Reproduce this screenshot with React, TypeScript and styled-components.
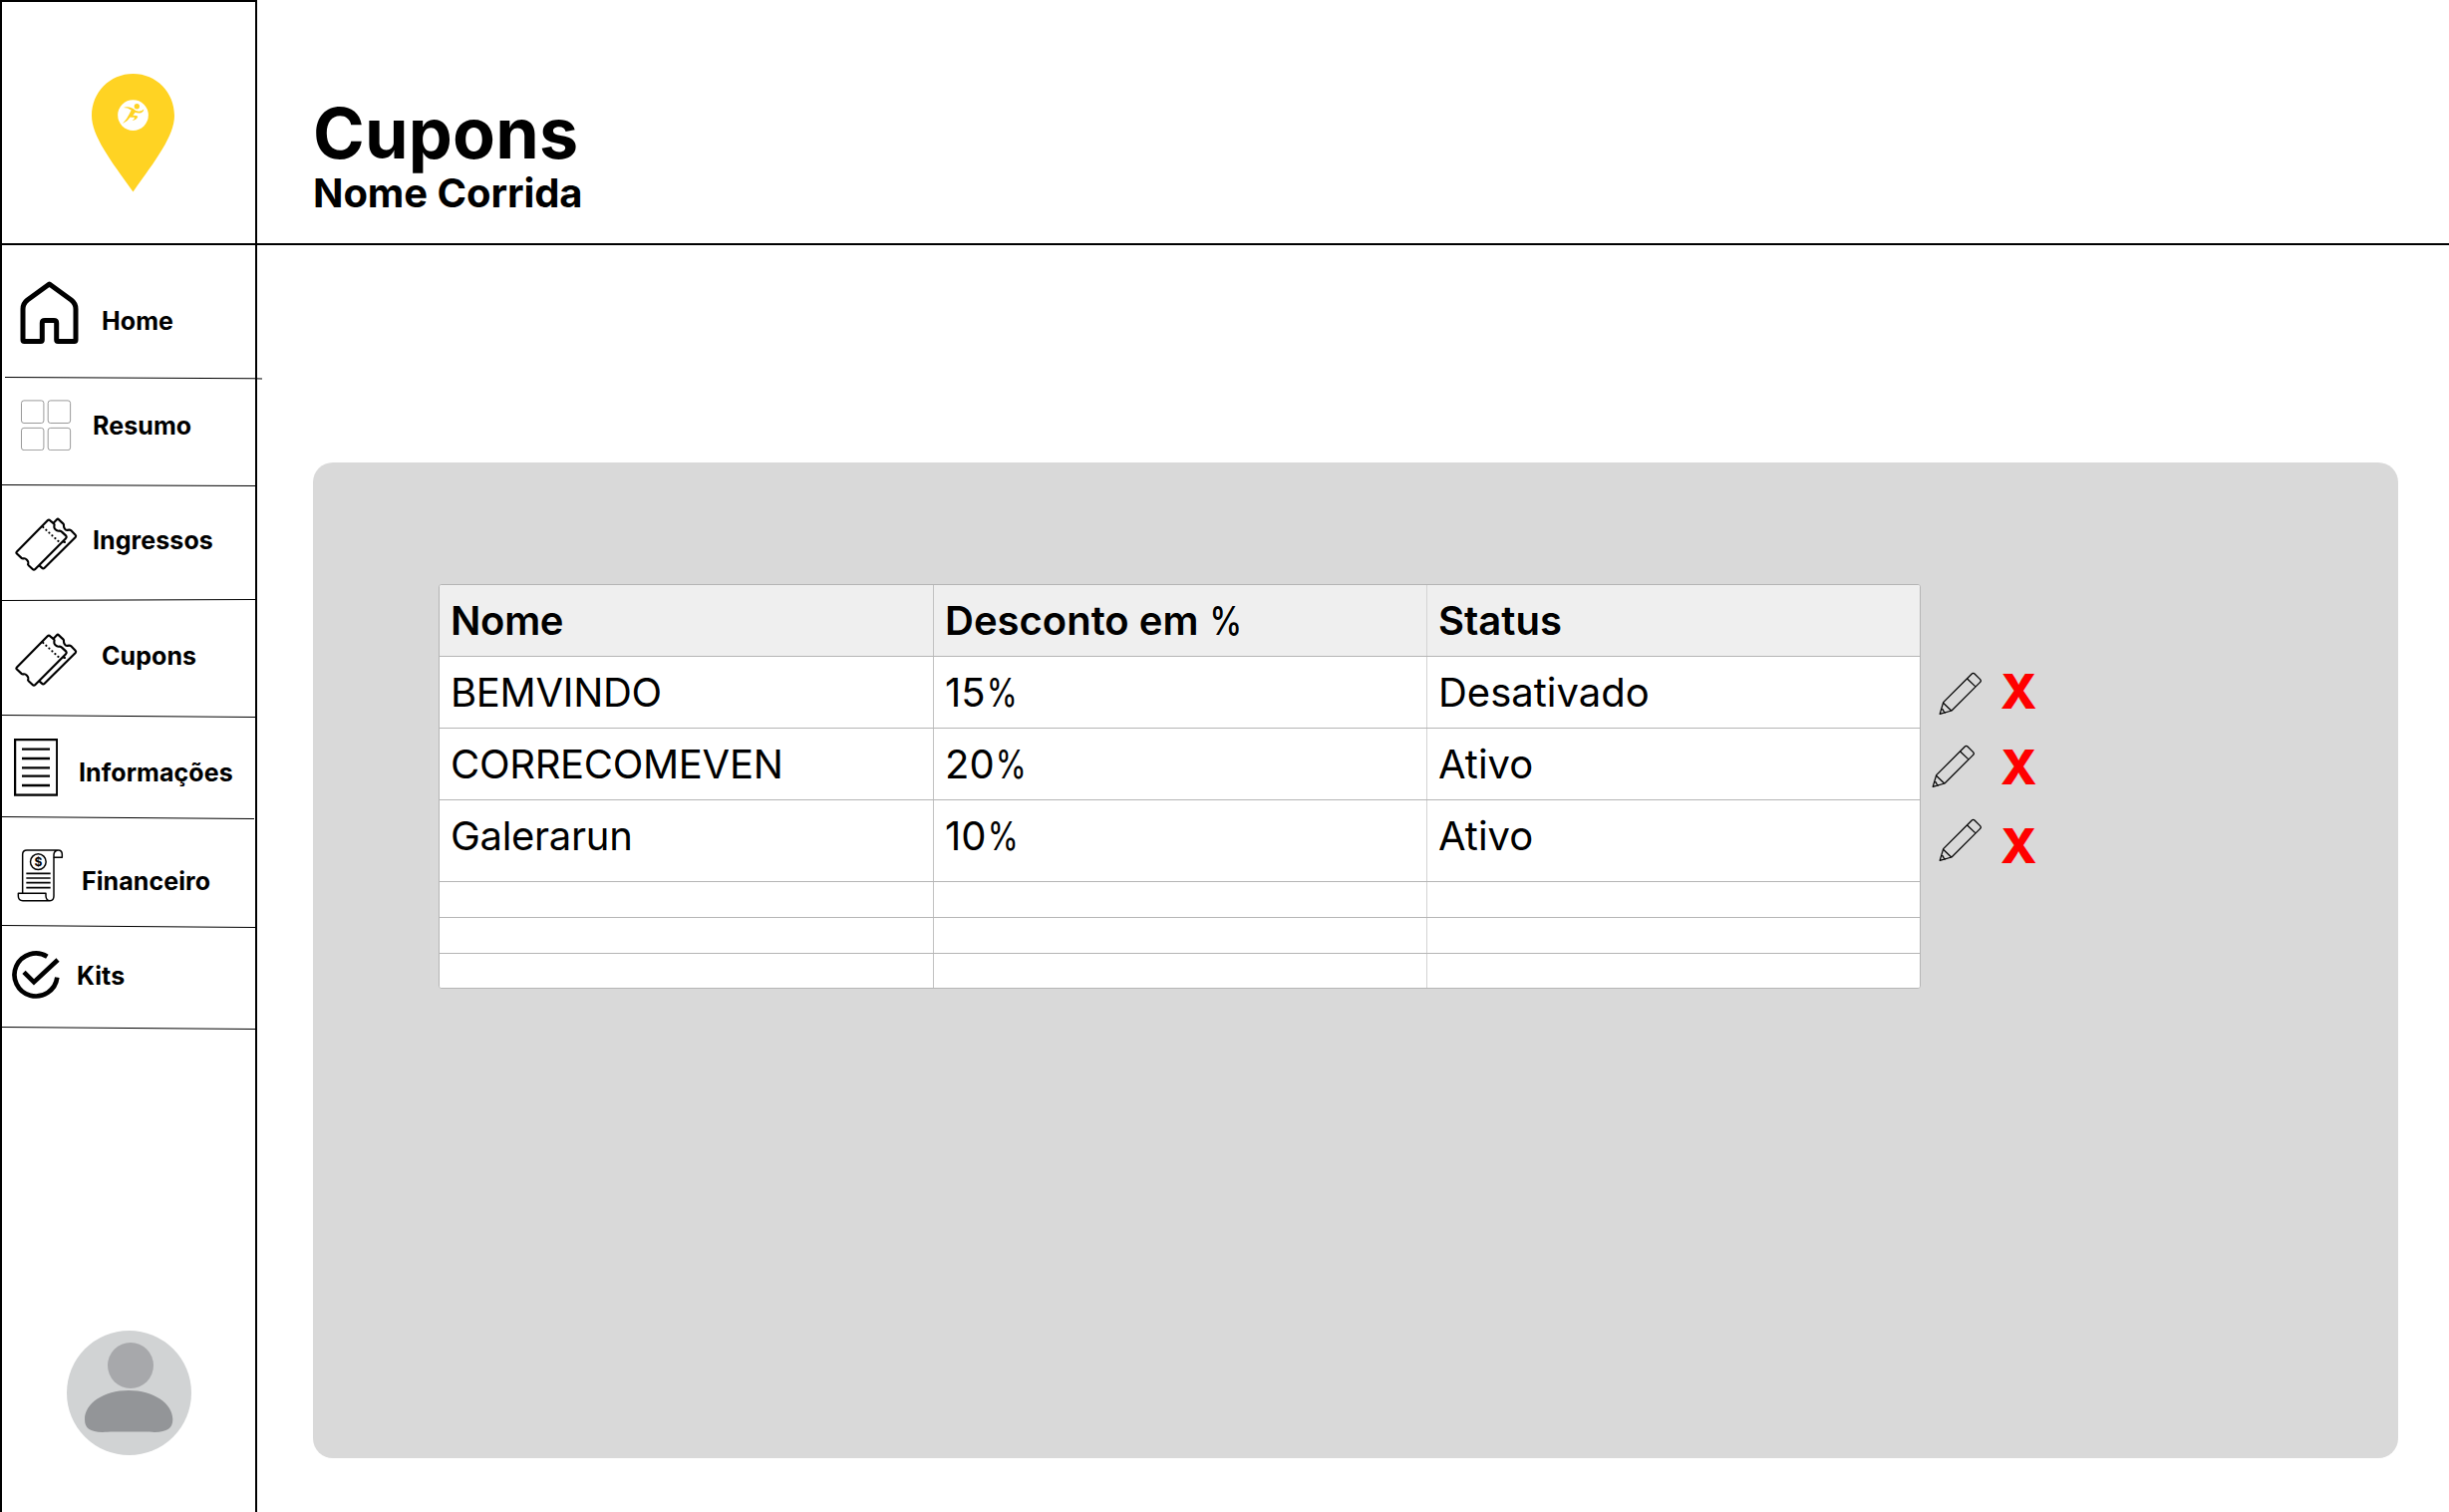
import React from "react";
import styled, { createGlobalStyle } from "styled-components";

const GlobalStyle = createGlobalStyle`
  *, *::before, *::after { box-sizing: border-box; }
  body { margin: 0; background: #fff; color: #000; font-family: Inter, "Liberation Sans", sans-serif; }
  svg { display: block; flex: none; }
`;

const Page = styled.div`
  display: grid;
  grid-template-columns: 258px 1fr;
  width: 2457px;
  height: 1517px;
  overflow: hidden;
  background: #fff;
`;

const Sidebar = styled.aside`
  display: flex;
  flex-direction: column;
  border: 2px solid #000;
  border-bottom: 0;
`;

const LogoBox = styled.div`
  flex: none;
  height: 244px;
  padding: 72px 0 0 90px;
  border-bottom: 2px solid #000;
`;

const Nav = styled.nav`
  display: flex;
  flex-direction: column;
`;

const NavItem = styled.a<{ $height: number }>`
  display: flex;
  align-items: flex-start;
  height: ${(p) => p.$height}px;
  color: #000;
  text-decoration: none;
`;

const IconSlot = styled.span<{ $left: number; $top: number; $width: number }>`
  flex: none;
  width: ${(p) => p.$left + p.$width}px;
  padding: ${(p) => p.$top}px 0 0 ${(p) => p.$left}px;
`;

const NavLabel = styled.span<{ $gap: number; $top: number }>`
  padding: ${(p) => p.$top}px 0 0 ${(p) => p.$gap}px;
  font-size: 25px;
  line-height: 30px;
  font-weight: 700;
  letter-spacing: 0.08px;
  white-space: nowrap;
`;

const Divider = styled.div<{ $drop: number; $start?: number; $length?: number }>`
  flex: none;
  height: 1px;
  width: ${(p) => p.$length ?? 254}px;
  margin-left: ${(p) => p.$start ?? 0}px;
  background: #000;
  transform: skewY(${(p) => Math.atan(p.$drop / (p.$length ?? 254))}rad);
  transform-origin: left center;
`;

const UserBox = styled.div`
  margin-top: auto;
  padding: 0 0 57px 65px;
`;

const Main = styled.main`
  display: flex;
  flex-direction: column;
  min-width: 0;
`;

const Header = styled.header`
  flex: none;
  height: 246px;
  padding: 95px 0 0 56px;
  border-bottom: 2px solid #000;
`;

const Title = styled.h1`
  margin: 0;
  font-size: 70px;
  line-height: 78px;
  font-weight: 700;
  letter-spacing: 0.2px;
`;

const Subtitle = styled.h2`
  margin: 0;
  font-size: 40px;
  line-height: 41px;
  font-weight: 700;
  letter-spacing: -0.08px;
`;

const Panel = styled.section`
  display: flex;
  align-items: flex-start;
  width: 2092px;
  height: 999px;
  margin: 218px 0 0 56px;
  padding: 122px 0 0 126px;
  border-radius: 20px;
  background: #d9d9d9;
`;

const Table = styled.div`
  width: 1487px;
  border: 1px solid #b5b5b5;
  border-radius: 3px;
  overflow: hidden;
  background: #fff;
`;

const Row = styled.div<{ $height: number; $head?: boolean }>`
  display: grid;
  grid-template-columns: 496px 495px 1fr;
  height: ${(p) => p.$height}px;
  background: ${(p) => (p.$head ? "#efefef" : "#fff")};
  font-weight: ${(p) => (p.$head ? 600 : 400)};
  border-bottom: 1px solid #b5b5b5;
  &:last-child { border-bottom: 0; }
`;

const Cell = styled.div`
  padding: 12px 0 0 11px;
  font-size: 40px;
  line-height: 48px;
  white-space: nowrap;
  border-right: 1px solid #d3d3d3;
  &:first-child { letter-spacing: -0.3px; border-right-color: #c2c2c2; }
  &:last-child { border-right: 0; }
`;

const PercentSign = styled.span<{ $strong?: boolean }>`
  display: inline-block;
  font-weight: ${(p) => (p.$strong ? 500 : 400)};
  transform: scaleX(${(p) => (p.$strong ? 0.82 : 0.79)});
  transform-origin: 3px 50%;
`;

const Actions = styled.div`
  display: flex;
  flex-direction: column;
`;

const ActionRow = styled.div<{ $height: number }>`
  display: flex;
  align-items: flex-start;
  height: ${(p) => p.$height}px;
`;

const IconButton = styled.button<{ $left: number; $top: number }>`
  flex: none;
  width: 68px;
  height: 60px;
  margin: 0;
  border: 0;
  background: none;
  padding: ${(p) => p.$top}px 0 0 ${(p) => p.$left}px;
`;

const DeleteButton = styled.button<{ $top: number }>`
  margin: ${(p) => p.$top}px 0 0;
  padding: 0 0 0 12px;
  border: 0;
  background: none;
  color: #ff0000;
  font: 800 48px/48px Inter, "Liberation Sans", sans-serif;
`;

const Logo = () => (
  <svg width="83" height="118.5" viewBox="36 42 249 355">
    <path
      fill="#ffd323"
      d="M160.500 42C231 42 285 98 285 168C285 228 229 302 160.500 397C92 302 36 228 36 168C36 98 90 42 160.500 42Z"
    />
    <circle cx="160.500" cy="166.500" r="46" fill="#fff" />
    <g fill="#ffd323">
      <circle cx="172" cy="140" r="8" />
      <path d="M132 144Q146 138 161 147Q168 155 178 155Q188 154 193 148Q192 159 179 160Q171 160 167 158L160 167Q173 167 175 171Q171 181 158 183Q166 177 165 173Q156 174 152 172Q145 184 129 192Q142 178 149 163L155 151Q145 144 132 144Z" />
    </g>
  </svg>
);

const HomeIcon = () => (
  <svg width="64" height="68" viewBox="0 0 64 68" fill="none" stroke="#000" strokeWidth="5" strokeLinejoin="round">
    <path d="M31.500 5L53.500 21Q58 24.500 58 30V61Q58 62.500 56.500 62.500H40.200Q38.700 62.500 38.700 61V44Q38.700 41.500 36 41.500H27Q24.300 41.500 24.300 44V61Q24.300 62.500 22.800 62.500H6.500Q5 62.500 5 61V30Q5 24.500 9.500 21Z" />
  </svg>
);

const GridIcon = () => (
  <svg width="52" height="52" viewBox="0 0 52 52" fill="none" stroke="#808080" strokeWidth="0.8">
    <rect x="1.500" y="1.900" width="22.400" height="22.600" rx="2.500" />
    <rect x="28.200" y="1.900" width="22.400" height="22.600" rx="2.500" />
    <rect x="1.500" y="29.400" width="22.400" height="22.200" rx="2.500" />
    <rect x="28.200" y="29.400" width="22.400" height="22.200" rx="2.500" />
  </svg>
);

const TicketIcon = () => (
  <svg width="65" height="56.667" viewBox="42 145 195 170" fill="none" stroke="#000" strokeWidth="6.5" strokeLinejoin="round" strokeLinecap="round">
    <path d="M50 252L143 158Q147 154 151 158L162 167Q165 170 163 175Q162 181 167 185Q172 190 178 189Q183 188 186 192L199 204Q202 208 198 212L106 304Q102 308 98 304L86 293Q83 290 85 286Q86 281 81 276Q76 271 71 272Q67 273 64 270L50 257Q48 254 50 252Z" />
    <path d="M161 165L171 155Q174 151 177 155L190 167Q193 170 192 175Q192 181 197 185Q201 188 206 186Q211 185 214 188L227 201Q230 204 227 208L134 300Q130 304 126 300L119 294" />
    <path d="M130 178L178 222" strokeWidth="6.500" strokeDasharray="0.100 12.200" />
    <path d="M192 222L195 223" />
  </svg>
);

const DocumentIcon = () => (
  <svg width="44.333" height="57.667" viewBox="42 94 133 173" fill="none" stroke="#000" strokeWidth="7">
    <rect x="45.200" y="97.200" width="126.600" height="166.600" />
    <path d="M66 126H150M66 154H150M66 182H150M66 207H150M66 235H150" />
  </svg>
);

const BillIcon = () => (
  <svg width="47.333" height="54.667" viewBox="50 422 142 164" fill="none" stroke="#000" strokeWidth="4.400" strokeLinejoin="round">
    <path d="M67 557V441Q67 428 80 428H174Q186 428 186 441V450H161V441Q162 430 173 428" />
    <path d="M161 450V566Q161 580 149 580H68Q54 580 54 566V558H137V566Q138 580 149 580" />
    <circle cx="114" cy="463" r="23.500" />
    <path d="M78 498H151M78 512H151M78 526H151M78 541H151" strokeWidth="5" />
    <text x="114" y="476" textAnchor="middle" fontFamily="Inter, sans-serif" fontSize="36" fontWeight="700" fill="#000" stroke="none">
      $
    </text>
  </svg>
);

const CheckIcon = () => (
  <svg width="48" height="48" viewBox="34 163 144 144" fill="none" stroke="#000" strokeWidth="14">
    <path d="M140 180A64.500 64.500 0 1 0 170 243" />
    <path d="M70 227L100 257L172 190" />
  </svg>
);

const PencilIcon = () => (
  <svg width="43.333" height="43.333" viewBox="136 96 130 130" fill="none" stroke="#000" strokeWidth="3.800" strokeLinejoin="round">
    <path d="M139.500 223L150 188L236 102Q240 98.500 244 102L261 119Q265 123 261 127L175 213Z" />
    <path d="M222 117L246 140M149 189L174 213M143 209L149 210L151 215L156 220" />
  </svg>
);

const Avatar = () => (
  <svg width="125" height="125" viewBox="0 0 125 125">
    <circle cx="62.500" cy="62.500" r="62.500" fill="#d1d3d4" />
    <circle cx="64" cy="35" r="23" fill="#a7a8ab" />
    <path
      fill="#939598"
      d="M62 60C87 60 106.300 73 106.300 89C106.300 98 101 101.700 88 101.900C78 101.500 46 101.500 36 101.900C23 101.700 18 98 18 89C18 73 37 60 62 60Z"
    />
  </svg>
);

type Entry = {
  label: string;
  icon: React.ReactNode;
  height: number;
  slot: [number, number, number];
  text: [number, number];
  drop: number;
  start?: number;
  length?: number;
};

const entries: Entry[] = [
  { label: "Home", icon: <HomeIcon />, height: 132, slot: [16, 34, 64], text: [20, 61], drop: 1.4, start: 3, length: 258 },
  { label: "Resumo", icon: <GridIcon />, height: 107, slot: [18, 21, 52], text: [21, 33], drop: 1 },
  { label: "Ingressos", icon: <TicketIcon />, height: 115, slot: [12, 31.3, 65], text: [14, 40], drop: -1 },
  { label: "Cupons", icon: <TicketIcon />, height: 114, slot: [12, 31.3, 65], text: [23, 40], drop: 2 },
  { label: "Informações", icon: <DocumentIcon />, height: 101, slot: [12, 23.3, 44], text: [21, 42], drop: 2, length: 253 },
  { label: "Financeiro", icon: <BillIcon />, height: 108, slot: [14.7, 30.7, 47.3], text: [18, 49], drop: 2 },
  { label: "Kits", icon: <CheckIcon />, height: 101, slot: [10, 25.3, 48], text: [17, 35], drop: 2 },
];

const coupons = [
  { name: "BEMVINDO", discount: 15, status: "Desativado" },
  { name: "CORRECOMEVEN", discount: 20, status: "Ativo" },
  { name: "Galerarun", discount: 10, status: "Ativo" },
];

const actions = [
  { height: 72, pencil: [18, 13], remove: 11 },
  { height: 72, pencil: [11, 15], remove: 15 },
  { height: 82, pencil: [18, 18], remove: 22 },
];

export default function App() {
  return (
    <Page>
      <GlobalStyle />
      <Sidebar>
        <LogoBox>
          <Logo />
        </LogoBox>
        <Nav>
          {entries.map((e) => (
            <React.Fragment key={e.label}>
              <NavItem $height={e.height}>
                <IconSlot $left={e.slot[0]} $top={e.slot[1]} $width={e.slot[2]}>
                  {e.icon}
                </IconSlot>
                <NavLabel $gap={e.text[0]} $top={e.text[1]}>
                  {e.label}
                </NavLabel>
              </NavItem>
              <Divider $drop={e.drop} $start={e.start} $length={e.length} />
            </React.Fragment>
          ))}
        </Nav>
        <UserBox>
          <Avatar />
        </UserBox>
      </Sidebar>
      <Main>
        <Header>
          <Title>Cupons</Title>
          <Subtitle>Nome Corrida</Subtitle>
        </Header>
        <Panel>
          <Table>
            <Row $height={72} $head>
              <Cell>Nome</Cell>
              <Cell>
                Desconto em <PercentSign $strong>%</PercentSign>
              </Cell>
              <Cell>Status</Cell>
            </Row>
            {coupons.map((c, i) => (
              <Row key={c.name} $height={i === 2 ? 82 : 72}>
                <Cell>{c.name}</Cell>
                <Cell>
                  {c.discount}
                  <PercentSign>%</PercentSign>
                </Cell>
                <Cell>{c.status}</Cell>
              </Row>
            ))}
            {[36, 36, 34].map((height, i) => (
              <Row key={i} $height={height}>
                <Cell />
                <Cell />
                <Cell />
              </Row>
            ))}
          </Table>
          <Actions>
            <ActionRow $height={73} />
            {actions.map((a, i) => (
              <ActionRow key={i} $height={a.height}>
                <IconButton aria-label="Editar" $left={a.pencil[0]} $top={a.pencil[1]}>
                  <PencilIcon />
                </IconButton>
                <DeleteButton $top={a.remove}>X</DeleteButton>
              </ActionRow>
            ))}
          </Actions>
        </Panel>
      </Main>
    </Page>
  );
}
